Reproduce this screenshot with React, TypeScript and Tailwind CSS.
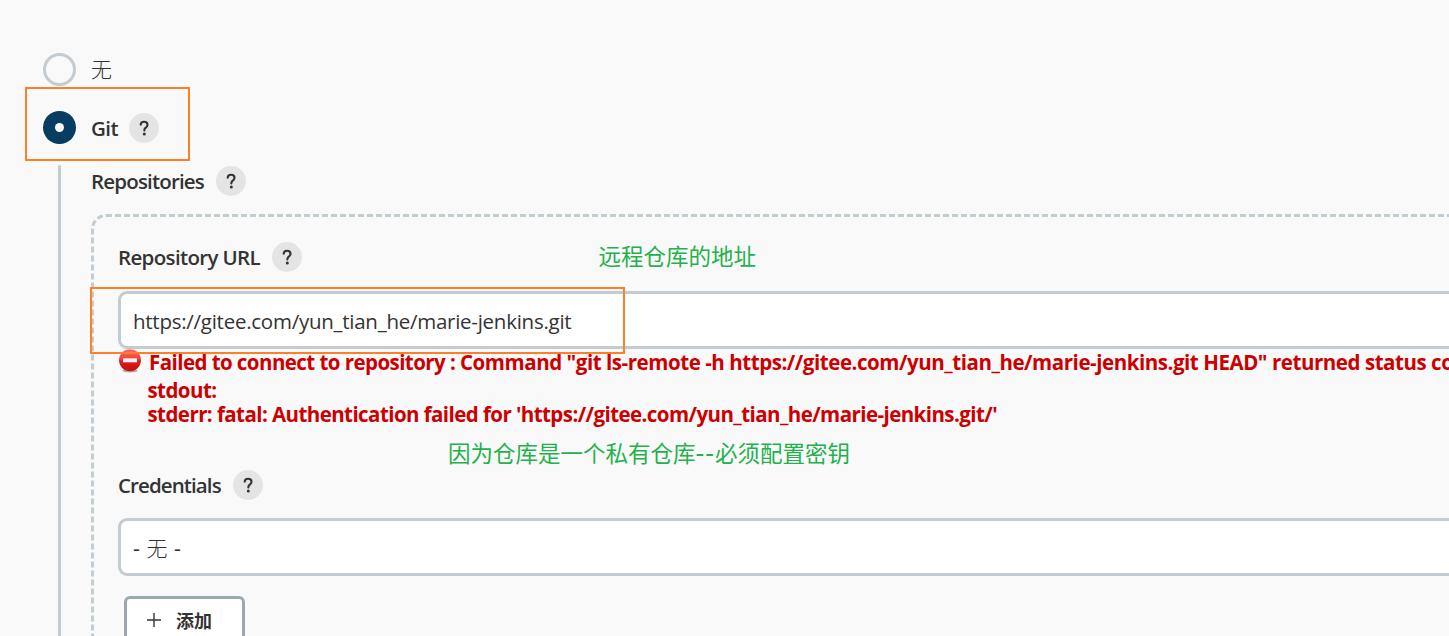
import { clsx } from "clsx";

interface FieldLabelProps {
  text: string;
  className?: string;
}

function HelpButton() {
  return (
    <button
      aria-label="Help"
      className="size-[30px] shrink-0 rounded-full bg-[#e4e4e4] hover:bg-[#d8d8d8]"
    >
      <svg viewBox="0 0 30 30" className="size-[30px]" fill="none">
        <path
          d="M11.7 11.6c.1-1.8 1.4-2.8 3.3-2.8 2 0 3.5 1.2 3.5 3 0 1.4-.8 2.1-1.7 2.8-1.1.8-1.5 1.4-1.5 2.8"
          stroke="#333"
          strokeWidth="2.1"
          strokeLinecap="round"
        />
        <circle cx="15.3" cy="21.1" r="1.5" fill="#333" />
      </svg>
    </button>
  );
}

function FieldLabel({ text, className }: FieldLabelProps) {
  return (
    <div className="flex h-[30px] items-center">
      <span className={clsx("shrink-0 whitespace-nowrap pt-px font-semibold", className)}>
        {text}
      </span>
      <HelpButton />
    </div>
  );
}

function ErrorIcon() {
  return (
    <svg viewBox="0 0 24 24" className="-mt-1 size-6 shrink-0">
      <defs>
        <linearGradient id="stop" x1="0" y1="0" x2="0" y2="1">
          <stop offset="0" stopColor="#ff6a62" />
          <stop offset="0.45" stopColor="#f03f3f" />
          <stop offset="0.55" stopColor="#dd1c1e" />
          <stop offset="1" stopColor="#c80c0e" />
        </linearGradient>
      </defs>
      <ellipse cx="12" cy="21.8" rx="7.5" ry="1.7" fill="#000" opacity="0.3" />
      <circle cx="12" cy="11.3" r="11" fill="url(#stop)" />
      <rect x="5" y="9.3" width="14" height="4" fill="#f3eeee" />
    </svg>
  );
}

function ErrorMessage() {
  return (
    <div className="h-[81px] whitespace-nowrap font-bold text-[#c00]">
      <div className="flex h-[27px] items-center gap-[7px]">
        <ErrorIcon />
        <p className="-mt-px tracking-[-0.45px]">
          <span className="tracking-[-0.56px]">Failed to connect to repository : </span>
          Command "git ls-remote -h https://gitee.com/yun_tian_he/marie-jenkins.git HEAD" returned
          status code 128:
        </p>
      </div>
      <div className="ml-[29.5px] pt-[2px] leading-6 tracking-[-0.57px]">
        <p>stdout:</p>
        <p>stderr: fatal: Authentication failed for 'https://gitee.com/yun_tian_he/marie-jenkins.git/'</p>
      </div>
    </div>
  );
}

export default function App() {
  return (
    <div className="relative h-[636px] w-full overflow-hidden bg-[#f9f9f9] pt-[53px] font-['Open_Sans','Noto_Sans_CJK_SC',sans-serif] text-[20.5px] text-[#333]">
      <div className="ml-[43px] flex h-[33px] items-center gap-[15px]">
        <span className="size-[33px] rounded-full border-3 border-[#c3ccd1]" />
        <span className="text-[21px] font-light">无</span>
      </div>

      <div className="mt-[25px] ml-[43px] flex h-[33px] items-center gap-[15px]">
        <span className="flex size-[33px] items-center justify-center rounded-full bg-[#063d60]">
          <span className="size-[9px] rounded-full bg-[#f9f9f9]" />
        </span>
        <div className="pt-px">
          <FieldLabel text="Git" className="w-[38px] pb-px tracking-[-0.6px]" />
        </div>
      </div>

      <div className="mt-[21px] ml-[58px] flex">
        <div className="h-[600px] w-[3px] shrink-0 rounded-full bg-[#c3ccd1]" />
        <div className="ml-[30px] shrink-0 pt-px">
          <FieldLabel text="Repositories" className="w-[125px] tracking-[-0.82px]" />

          <div className="mt-[18px] h-[600px] w-[1500px] rounded-[15px] border-3 border-dashed border-[#c3ccd1] px-6 pt-[25px]">
            <FieldLabel text="Repository URL" className="w-[154px] tracking-[-0.65px]" />
            <div className="mt-[19px] flex h-[58px] items-center rounded-[9px] border-3 border-[#c3ccd1] bg-white px-3">
              <span className="pt-0.5 tracking-[-0.26px]">
                https://gitee.com/yun_tian_he/marie-jenkins.git
              </span>
            </div>
            <ErrorMessage />

            <div className="mt-10">
              <FieldLabel text="Credentials" className="w-[115px] tracking-[-0.9px]" />
            </div>
            <div className="mt-[18px] flex h-[58px] items-center rounded-[9px] border-3 border-[#c3ccd1] bg-white px-3">
              <span className="pt-[3px] text-[21.5px] [word-spacing:1px]">
                - <span className="text-[21px] font-light">无</span> -
              </span>
            </div>

            <button className="mt-5 ml-1.5 flex h-[54px] w-[121px] items-center rounded-[6px] border-3 border-[#9ba8b0] bg-white pl-[19px]">
              <svg viewBox="0 0 16 16" className="-mt-1.5 size-4" fill="none">
                <path d="M8 1v14M1 8h14" stroke="#333" strokeWidth="1.4" />
              </svg>
              <span className="-mt-1 ml-[14px] text-lg font-bold">添加</span>
            </button>
          </div>
        </div>
      </div>

      {/* annotations drawn over the form */}
      <div className="absolute top-[87px] left-[25px] h-[74px] w-[165px] border-2 border-[#ff7f27]" />
      <div className="absolute top-[287px] left-[90px] h-[67px] w-[535px] border-2 border-[#ff7f27]" />
      <p className="absolute top-[241px] left-[598.5px] text-[22.5px] leading-8 whitespace-nowrap text-[#22b14c]">
        远程仓库的地址
      </p>
      <p className="absolute top-[438px] left-[448px] text-[22.5px] leading-8 whitespace-nowrap text-[#22b14c]">
        因为仓库是一个私有仓库
        <span className="text-[27px] leading-none tracking-[1px]">--</span>
        必须配置密钥
      </p>
    </div>
  );
}
